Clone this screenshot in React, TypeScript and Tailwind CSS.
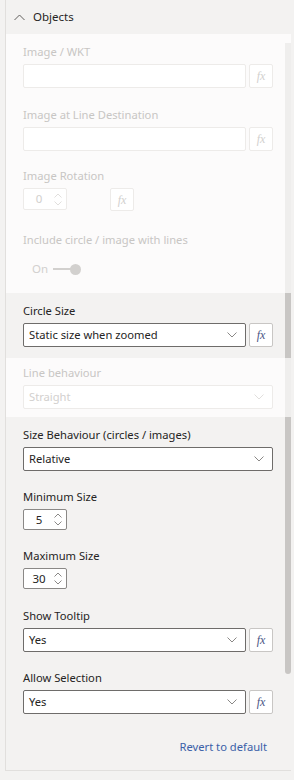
import React from "react";

const Chevron = ({ color = "#605e5c" }: { color?: string }) => (
  <svg width="10" height="6" viewBox="0 0 10 6" className="block">
    <path d="M0.5 0.5 L5 5 L9.5 0.5" fill="none" stroke={color} strokeWidth="1" />
  </svg>
);

const Label = ({ children, disabled }: { children: React.ReactNode; disabled?: boolean }) => (
  <div className={`h-[16px] leading-[16px] text-[11.2px] whitespace-nowrap ${disabled ? "text-[#c8c6c4]" : "text-[#252423]"}`}>
    {children}
  </div>
);

const Fx = ({ disabled, h = "h-[24px]" }: { disabled?: boolean; h?: string }) => (
  <div
    className={`w-[24px] ${h} shrink-0 rounded-[2px] border bg-white flex items-center justify-center ${
      disabled ? "border-[#edebe9]" : "border-[#c8c6c4]"
    }`}
  >
    <span
      className={`font-['Liberation_Serif',serif] italic text-[12px] leading-none ${
        disabled ? "text-[#d2d0ce]" : "text-[#4a5585]"
      }`}
    >
      fx
    </span>
  </div>
);

const Dropdown = ({ value, disabled, w }: { value?: string; disabled?: boolean; w: string }) => (
  <div
    className={`${w} h-[24px] rounded-[2px] border bg-white flex items-center justify-between pl-[5px] pr-[8px] ${
      disabled ? "border-[#edebe9]" : "border-[#6e6c6a]"
    }`}
  >
    <span className={`text-[11.2px] leading-none ${disabled ? "text-[#d2d0ce]" : "text-[#252423]"}`}>{value}</span>
    <Chevron color={disabled ? "#e1dfdd" : "#8a8886"} />
  </div>
);

const Input = ({ disabled }: { disabled?: boolean }) => (
  <div className={`w-[223px] h-[24px] rounded-[2px] border bg-white ${disabled ? "border-[#edebe9]" : "border-[#6e6c6a]"}`} />
);

const SmallChevron = ({ up, color }: { up?: boolean; color: string }) => (
  <svg width="8" height="5" viewBox="0 0 8 5" className="block">
    <path d={up ? "M0.5 4.5 L4 1 L7.5 4.5" : "M0.5 0.5 L4 4 L7.5 0.5"} fill="none" stroke={color} strokeWidth="1" />
  </svg>
);

const Spin = ({ value, disabled, h }: { value: string; disabled?: boolean; h: string }) => (
  <div
    className={`w-[44px] ${h} rounded-[2px] border bg-white flex items-center ${
      disabled ? "border-[#edebe9]" : "border-[#8a8886]"
    }`}
  >
    <div className={`flex-1 text-center text-[11.5px] leading-none pl-[2px] ${disabled ? "text-[#d2d0ce]" : "text-[#252423]"}`}>
      {value}
    </div>
    <div className="w-[14px] flex flex-col items-center gap-[3px] pr-[3px]">
      <SmallChevron up color={disabled ? "#e1dfdd" : "#8a8886"} />
      <SmallChevron color={disabled ? "#e1dfdd" : "#8a8886"} />
    </div>
  </div>
);

export default function App() {
  return (
    <div className="w-[294px] h-[780px] bg-[#f3f2f1] overflow-hidden font-['Noto_Sans',sans-serif]">
      <div className="ml-[5px] w-[286px] h-[771px] border-l border-b border-[#e1dfdd] flex flex-col">
        {/* Header */}
        <div className="h-[34px] shrink-0 flex items-center pl-[8px]">
          <svg width="11" height="7" viewBox="0 0 11 7" className="block">
            <path d="M0.5 6 L5.5 1 L10.5 6" fill="none" stroke="#605e5c" strokeWidth="1" />
          </svg>
          <span className="ml-[8px] text-[11.5px] leading-none text-[#252423]">Objects</span>
        </div>

        {/* Scroll area */}
        <div className="relative flex-1 flex flex-col">
          <div className="absolute right-0 top-[9px] w-[6px] h-[631px] bg-[#c8c6c4] rounded-b-[3px]" />

          {/* Section A - disabled */}
          <div className="relative z-10 h-[259px] shrink-0 bg-white/70 pl-[17px] pt-[10px]">
            <Label disabled>Image / WKT</Label>
            <div className="mt-[4px] flex gap-[3px]">
              <Input disabled />
              <Fx disabled />
            </div>
            <div className="mt-[19px]">
              <Label disabled>Image at Line Destination</Label>
            </div>
            <div className="mt-[4px] flex gap-[3px]">
              <Input disabled />
              <Fx disabled />
            </div>
            <div className="mt-[17px]">
              <Label disabled>Image Rotation</Label>
            </div>
            <div className="mt-[4px] flex items-start gap-[43px]">
              <Spin value="0" disabled h="h-[22px]" />
              <Fx disabled h="h-[23px]" />
            </div>
            <div className="mt-[21px]">
              <Label disabled>Include circle / image with lines</Label>
            </div>
            <div className="mt-[13px] h-[16px] flex items-center pl-[9px]">
              <span className="text-[11.5px] leading-none text-[#d2d0ce]">On</span>
              <div className="ml-[5px] w-[18px] h-[2px] bg-[#d2d0ce]" />
              <div className="w-[11px] h-[11px] rounded-full bg-[#d2d0ce] -ml-[1px]" />
            </div>
          </div>

          {/* Section B - active */}
          <div className="relative z-10 h-[65px] shrink-0 pl-[17px] pt-[10px]">
            <Label>Circle Size</Label>
            <div className="mt-[4px] flex gap-[3px]">
              <Dropdown value="Static size when zoomed" w="w-[223px]" />
              <Fx />
            </div>
          </div>

          {/* Section C - disabled */}
          <div className="relative z-10 h-[59px] shrink-0 bg-white/70 pl-[17px] pt-[7px]">
            <Label disabled>Line behaviour</Label>
            <div className="mt-[4px]">
              <Dropdown value="Straight" disabled w="w-[250px]" />
            </div>
          </div>

          {/* Section D - active */}
          <div className="relative z-10 flex-1 pl-[17px] pt-[10px] flex flex-col">
            <Label>Size Behaviour (circles / images)</Label>
            <div className="mt-[4px]">
              <Dropdown value="Relative" w="w-[250px]" />
            </div>
            <div className="mt-[18px]">
              <Label>Minimum Size</Label>
            </div>
            <div className="mt-[4px]">
              <Spin value="5" h="h-[21px]" />
            </div>
            <div className="mt-[18px]">
              <Label>Maximum Size</Label>
            </div>
            <div className="mt-[4px]">
              <Spin value="30" h="h-[21px]" />
            </div>
            <div className="mt-[19px]">
              <Label>Show Tooltip</Label>
            </div>
            <div className="mt-[4px] flex gap-[3px]">
              <Dropdown value="Yes" w="w-[223px]" />
              <Fx />
            </div>
            <div className="mt-[18px]">
              <Label>Allow Selection</Label>
            </div>
            <div className="mt-[4px] flex gap-[3px]">
              <Dropdown value="Yes" w="w-[223px]" />
              <Fx />
            </div>
            <div className="mt-[25px] h-[16px] flex justify-end pr-[24px]">
              <span className="text-[11.2px] leading-[16px] text-[#3a5fa8]">Revert to default</span>
            </div>
          </div>
        </div>
      </div>
    </div>
  );
}
